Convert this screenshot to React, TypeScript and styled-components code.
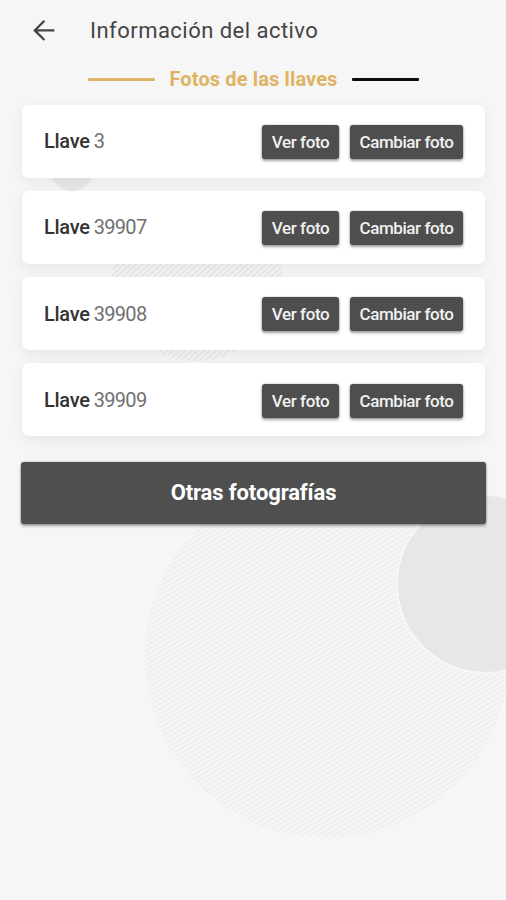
import React from "react";
import styled, { createGlobalStyle } from "styled-components";

const GlobalStyle = createGlobalStyle`
  *, *::before, *::after { box-sizing: border-box; }
  body { margin: 0; background: #f6f6f6; font-family: Roboto, "Liberation Sans", sans-serif; }
`;

const Screen = styled.div`
  position: relative;
  isolation: isolate;
  width: 506px;
  height: 900px;
  overflow: hidden;
  background: #f6f6f6;
`;

const Backdrop = styled.svg`
  position: absolute;
  inset: 0;
  z-index: -1;
`;

const Header = styled.header`
  display: flex;
  align-items: center;
  height: 60px;
  padding-left: 32px;
`;

const BackButton = styled.button`
  display: flex;
  width: 24px;
  height: 24px;
  padding: 0;
  border: 0;
  background: none;
`;

const Title = styled.h1`
  margin: 1px 0 0 34px;
  font-size: 22px;
  font-weight: 400;
  line-height: 30px;
  letter-spacing: 0.47px;
  color: #444;
  white-space: nowrap;
`;

const SectionHeading = styled.div`
  display: flex;
  align-items: center;
  justify-content: center;
  gap: 14px;
  height: 37px;
  padding-left: 1px;
`;

const Rule = styled.span<{ $color: string }>`
  width: 67px;
  height: 2.6px;
  margin-top: 2px;
  border-radius: 1px;
  background: ${(p) => p.$color};
`;

const SectionTitle = styled.h2`
  margin: 0;
  font-size: 20px;
  font-weight: 700;
  line-height: 24px;
  letter-spacing: 0.13px;
  color: #deb364;
  white-space: nowrap;
`;

const KeyList = styled.ul`
  display: flex;
  flex-direction: column;
  gap: 13.3px;
  margin: 7.5px 21px 0 22px;
  padding: 0;
  list-style: none;
`;

const KeyCard = styled.li`
  display: flex;
  align-items: center;
  height: 73px;
  padding: 0 22px;
  border-radius: 7px;
  background: #fff;
  box-shadow: 0 4px 14px rgba(0, 0, 0, 0.065);
`;

const KeyName = styled.span`
  flex: 1;
  font-size: 20px;
  line-height: 24px;
  letter-spacing: -0.72px;
  color: #707070;
`;

const KeyLabel = styled.b`
  font-weight: 500;
  letter-spacing: -0.3px;
  color: #333;
`;

const Button = styled.button<{ $width: number }>`
  width: ${(p) => p.$width}px;
  height: 34px;
  margin: 1.6px 0 0 11px;
  padding: 0;
  border: 0;
  border-radius: 3px;
  background: #4e4e4e;
  box-shadow: 0 2px 3px rgba(0, 0, 0, 0.35), 0 0 2px rgba(0, 0, 0, 0.3);
  font: 500 17px/34px Roboto, "Liberation Sans", sans-serif;
  letter-spacing: -0.42px;
  color: #f1f1f1;
  white-space: nowrap;
`;

const MoreButton = styled.button`
  display: block;
  width: 465px;
  height: 62px;
  margin: 25.6px 0 0 21px;
  padding: 0;
  border: 0;
  border-radius: 3px;
  background: #4f4f4f;
  box-shadow: 0 2px 3px rgba(0, 0, 0, 0.35), 0 0 2px rgba(0, 0, 0, 0.3);
  font: 700 22px/62px Roboto, "Liberation Sans", sans-serif;
  letter-spacing: -0.12px;
  color: #fff;
`;

const keys = ["3", "39907", "39908", "39909"];

export default function App() {
  return (
    <>
      <GlobalStyle />
      <Screen>
        <Backdrop width="506" height="900" viewBox="0 0 506 900" aria-hidden="true">
          <defs>
            <pattern id="fine" width="8" height="4.1" patternUnits="userSpaceOnUse" patternTransform="rotate(-30)">
              <rect width="8" height="1.8" fill="#eeeeee" />
            </pattern>
            <pattern id="wide" width="8" height="4.2" patternUnits="userSpaceOnUse" patternTransform="rotate(-43)">
              <rect width="8" height="1.3" fill="#e6e6e6" />
            </pattern>
          </defs>
          <circle cx="72" cy="169" r="22" fill="#e8e8e8" />
          <circle cx="197" cy="276" r="85" fill="url(#wide)" />
          <circle cx="327" cy="656" r="182" fill="url(#fine)" />
          <circle cx="486" cy="584" r="89" fill="#e7e7e7" stroke="#f7f7f7" strokeWidth="2" />
        </Backdrop>
        <Header>
          <BackButton aria-label="Volver">
            <svg width="24" height="24" viewBox="0 0 24 24" fill="none" stroke="#444" strokeWidth="2.3">
              <path d="M22.3 12.4H3M12.4 2.8l-9.6 9.6 9.6 9.6" />
            </svg>
          </BackButton>
          <Title>Información del activo</Title>
        </Header>
        <SectionHeading>
          <Rule $color="#deb364" />
          <SectionTitle>Fotos de las llaves</SectionTitle>
          <Rule $color="#0c0c0c" />
        </SectionHeading>
        <KeyList>
          {keys.map((key) => (
            <KeyCard key={key}>
              <KeyName>
                <KeyLabel>Llave</KeyLabel> {key}
              </KeyName>
              <Button $width={77}>Ver foto</Button>
              <Button $width={113}>Cambiar foto</Button>
            </KeyCard>
          ))}
        </KeyList>
        <MoreButton>Otras fotografías</MoreButton>
      </Screen>
    </>
  );
}
